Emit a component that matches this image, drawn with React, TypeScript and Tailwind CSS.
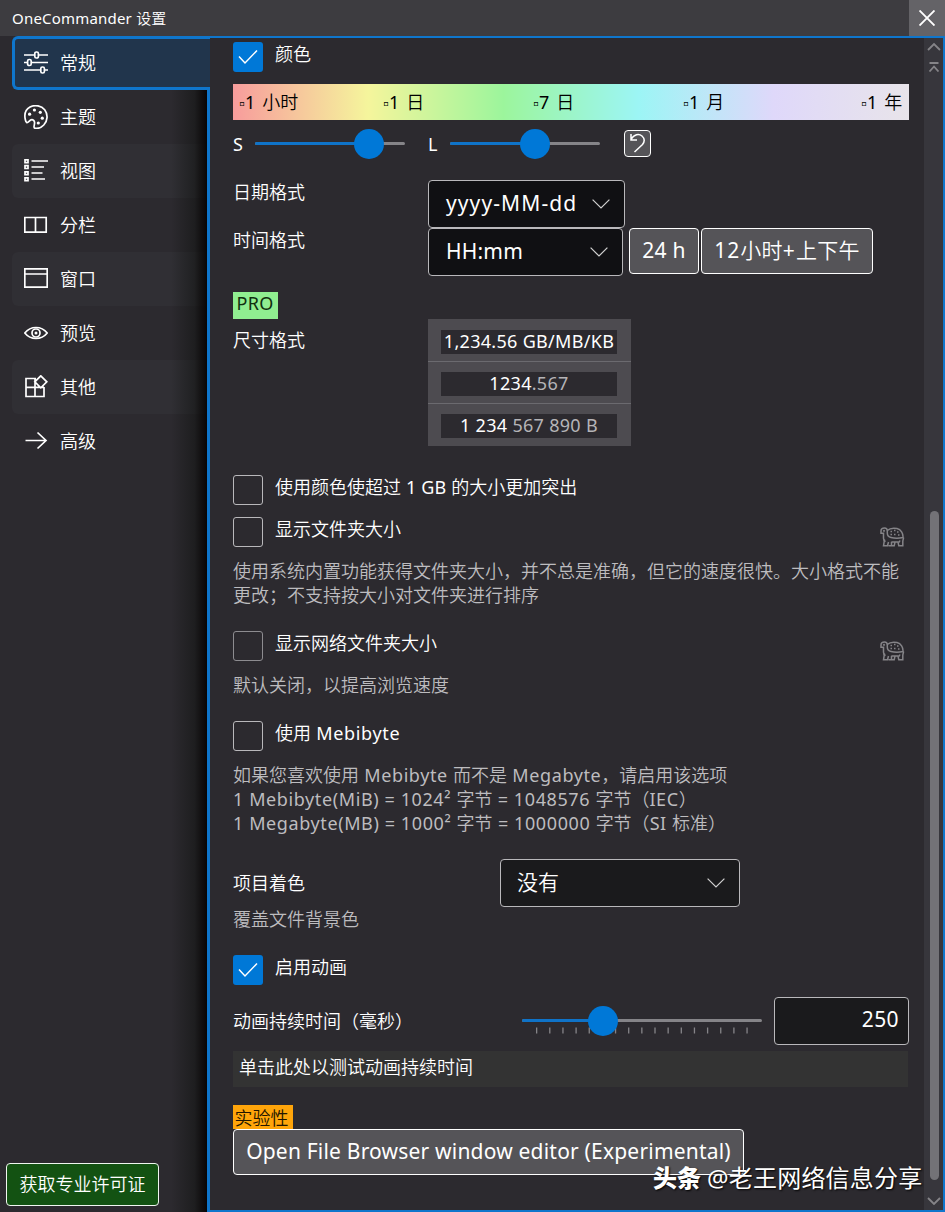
import { useState, type ReactNode } from "react";

type IconProps = { children: ReactNode };

function Icon({ children }: IconProps) {
  return (
    <svg width="24" height="24" viewBox="0 0 24 24" fill="none" stroke="#fff" strokeWidth="1.7" className="shrink-0">
      {children}
    </svg>
  );
}

const navItems = [
  {
    label: "常规",
    icon: (
      <Icon>
        <path d="M0 4h10.5M14.5 4H24M0 11.5h3.5M7.5 11.5H24M0 19h16.5M20.5 19H24" />
        <rect x="10.8" y="1" width="3.6" height="6" rx="1.6" />
        <rect x="3.6" y="8.5" width="3.6" height="6" rx="1.6" />
        <rect x="16.8" y="16" width="3.6" height="6" rx="1.6" />
      </Icon>
    ),
  },
  {
    label: "主题",
    icon: (
      <Icon>
        <path d="M1.3 14.5C.1 9 1.6 4.4 6 2 11-.6 17.5.6 20.7 4.8c3.5 4.7 3 11.2-.9 15.2-2.6 2.7-6.3 3.8-9.1 3.2-1.8-.5.3-3.6-.2-6.2-.4-2.2-2.6-3-4.5-1.5-1.3 1-2.2 2.6-3.4 1.9-.8-.5-1.1-1.8-1.3-2.9z" />
        <g fill="#fff" stroke="none">
          <circle cx="5.6" cy="9.2" r="1.6" />
          <circle cx="10.4" cy="5" r="1.6" />
          <circle cx="16.3" cy="7.3" r="1.6" />
          <circle cx="18.3" cy="13.2" r="1.6" />
          <circle cx="14.3" cy="18" r="1.6" />
        </g>
      </Icon>
    ),
  },
  {
    label: "视图",
    icon: (
      <Icon>
        <path d="M7.5 2H24M7.5 8H20M7.5 14h11M7.5 20H21" />
        <path d="M1 .8h3v2.8H1zM1 6.7h3v2.8H1zM1 12.8h3v2.8H1zM1 18.8h3v2.8H1z" />
      </Icon>
    ),
  },
  {
    label: "分栏",
    icon: (
      <Icon>
        <path d="M.8 4.5h21.4v14.7H.8zM11.5 4.5v14.7" />
      </Icon>
    ),
  },
  {
    label: "窗口",
    icon: (
      <Icon>
        <path d="M.8 1.8h22.4v18.4H.8zM.8 7h22.4" />
      </Icon>
    ),
  },
  {
    label: "预览",
    icon: (
      <Icon>
        <path d="M.8 12C4 8 7.8 6.5 12 6.5S20 8 23.2 12C20 16 16.2 17.5 12 17.5S4 16 .8 12z" />
        <circle cx="12" cy="12" r="4" />
        <circle cx="12" cy="12" r="1.5" fill="#fff" stroke="none" />
      </Icon>
    ),
  },
  {
    label: "其他",
    icon: (
      <Icon>
        <path d="M12 3.5H2v18h18V12M11 3.5v18M2 12.3h18M16.8.8l6 6-6 6-6-6z" />
      </Icon>
    ),
  },
  {
    label: "高级",
    icon: (
      <Icon>
        <path d="M1.5 11.5H22M13.5 3.5l8.5 8-8.5 8" />
      </Icon>
    ),
  },
];

const ages = [
  { text: "1 小时", className: "w-[144px]" },
  { text: "1 日", className: "w-[150px]" },
  { text: "7 日", className: "w-[150px]" },
  { text: "1 月", className: "w-[178px]" },
  { text: "1 年", className: "" },
];

// Latin runs are set a step heavier than the CJK text around them
function Mixed({ text, tracking = "tracking-[0.2px]" }: { text: string; tracking?: string }) {
  return text.split(/([ -~²]+)/).map((run, i) =>
    i % 2 === 1 ? (
      <span key={i} className={`font-normal ${tracking}`}>
        {run}
      </span>
    ) : (
      run
    ),
  );
}

function Chevron() {
  return (
    <svg width="18" height="10" viewBox="0 0 18 10" fill="none" stroke="#d0d0d0" strokeWidth="1.2" className="shrink-0">
      <path d="M.6.6 9 9l8.4-8.4" />
    </svg>
  );
}

function Turtle() {
  return (
    <svg width="25" height="20" viewBox="0 0 25 20" fill="none" stroke="#858488" strokeWidth="1.5" className="mt-2.5 shrink-0">
      <path d="M7.3 4C7.3 2 6.5 1 4.5 1 2.5 1 1 2 1 4v2.3h2.5v5c0 1.5.8 2.7 2 3.4M7.3 4v2c0 2.6 1.2 4 3.7 4.5 4 .9 8 .8 12 0 .3-4-2-8-6-9C13.5.8 10 .9 7.3 3.5" />
      <path d="M4.5 12.5 3.5 18.8h4l1-3.8M11.5 14.8v4h-3M11.5 15H18l.8 3.8h4V14l.8-3.5M15 15l-.8 3.8h-2.7M20 13.5l-1 2" />
      <path d="M10.5 4.5H12M14 3.5h1.5M17 5h1.5M10.5 7.5H12M14 7.5h1.5M18 8h1.5" strokeWidth="1.3" />
      <circle cx="4" cy="3.8" r=".4" />
    </svg>
  );
}

type CheckProps = { label: string; tracking?: string; initial?: boolean; dim?: boolean; slow?: boolean };

function Check({ label, tracking, initial = false, dim = false, slow = false }: CheckProps) {
  const [on, setOn] = useState(initial);
  const box = on ? "bg-[#0078d7]" : dim ? "border border-[#8d8c90]" : "border border-[#b9b8bb]";
  return (
    <div className="flex h-[30px] w-[672px] items-start justify-between">
      <button onClick={() => setOn(!on)} className="flex items-start gap-3">
        <span className={`flex size-[30px] items-center justify-center rounded-[3px] ${box}`}>
          {on && (
            <svg width="20" height="16" viewBox="0 0 20 16" fill="none" stroke="#fff" strokeWidth="1.5">
              <path d="M1 7.5 7 14 19 1.5" />
            </svg>
          )}
        </span>
        <span className="leading-6">
          <Mixed text={label} tracking={tracking} />
        </span>
      </button>
      {slow && <Turtle />}
    </div>
  );
}

type SliderProps = { width: number; value: number; ticks?: boolean };

function Slider({ width, value, ticks = false }: SliderProps) {
  return (
    <svg width={width} height="30" viewBox={`0 0 ${width} 30`} className="shrink-0">
      <rect y="13" width={width} height="3" rx="1.5" fill="#858488" />
      <rect y="13" width={value} height="3" rx="1.5" fill="#0f73c8" />
      {ticks &&
        Array.from({ length: 17 }, (_, i) => (
          <rect key={i} x={14 + i * 13.15} y="21.5" width="1.3" height="6" fill="#858488" />
        ))}
      <circle cx={value} cy="15" r="15" fill="#0078d7" />
    </svg>
  );
}

export default function App() {
  const [active, setActive] = useState(0);

  return (
    <div className="relative flex h-[1212px] w-[945px] flex-col overflow-hidden bg-[#2c2a2f] font-['Noto_Sans','Noto_Sans_CJK_SC',sans-serif] text-[18px] font-[350] whitespace-nowrap text-white">
      <header className="flex h-9 shrink-0 items-center justify-between bg-[#3d3c40] pl-3">
        <h1 className="text-[15px]">
          <Mixed text="OneCommander 设置" />
        </h1>
        <button aria-label="关闭" className="flex size-9 items-center justify-center bg-[#646367]">
          <svg width="16" height="16" viewBox="0 0 16 16" stroke="#fff" strokeWidth="1.9">
            <path d="m.5.5 15 15M15.5.5l-15 15" />
          </svg>
        </button>
      </header>

      <div className="flex min-h-0 flex-1">
        <aside className="relative flex w-[207px] shrink-0 flex-col justify-between">
          <nav className="flex flex-col pl-3">
            {navItems.map((item, i) => (
              <button
                key={item.label}
                onClick={() => setActive(i)}
                className={
                  i === active
                    ? "relative z-10 -mr-[3px] flex h-[54px] items-center gap-3 rounded-l-md border-3 border-r-0 border-[#0f76cc] bg-[#21354c] pl-[9px]"
                    : i % 2 === 0
                      ? "flex h-[54px] items-center gap-3 rounded-l-md bg-[#302f34] pl-3"
                      : "flex h-[54px] items-center gap-3 pl-3"
                }
              >
                {item.icon}
                <span>{item.label}</span>
              </button>
            ))}
          </nav>
          <div className="absolute inset-y-0 right-0 w-9 bg-linear-to-r from-transparent via-[#101210]/50 via-65% to-[#080606]" />
          <button className="mb-1.5 ml-1.5 h-[43px] w-[153px] rounded-[4px] border border-[#f0f6f0] bg-[#135212]">
            获取专业许可证
          </button>
        </aside>

        <main className="flex flex-1 border-2 border-l-3 border-[#0f76cc]">
          <div className="flex flex-1 flex-col items-start pt-1 pl-[23px]">
            <Check label="颜色" initial />

            <div className="mt-3 flex h-9 w-[676px] items-center bg-[linear-gradient(90deg,#f79c9c_0%,#f5f59c_20%,#9cf59c_40%,#9cf5f5_60%,#dfd8fa_80%,#e8e4ea_100%)] pl-1.5 text-black">
              {ages.map((age) => (
                <span key={age.text} className={age.className}>
                  <span className="inline-block w-1.5 font-['DejaVu_Sans'] text-[16px]">▫</span>
                  <Mixed text={age.text} tracking="tracking-[1.1px]" />
                </span>
              ))}
            </div>

            <div className="mt-[9px] flex h-[30px] items-center font-normal">
              <span className="w-[22px]">S</span>
              <Slider width={150} value={114} />
              <span className="ml-[23px] w-[22px]">L</span>
              <Slider width={150} value={85} />
              <button aria-label="重置" className="mb-0.5 ml-6 flex size-[27px] items-center justify-center rounded-[4px] border border-white bg-[#555458]">
                <svg width="17" height="20" viewBox="0 0 17 20" fill="none" stroke="#fff" strokeWidth="1.5">
                  <path d="M2 1v6h6M2 6.5C5 1 10 .3 13 3c3 2.8 2.5 6 .5 8.5L5.5 19" />
                </svg>
              </button>
            </div>

            <div className="mt-[21px] flex h-12 items-start">
              <span className="w-[195px] leading-6">日期格式</span>
              <button className="flex h-12 w-[197px] items-center justify-between rounded-[4px] border border-[#b9b8bb] bg-[#101013] pr-[14px] pl-[17px] text-[21px] font-normal">
                <span className="tracking-[1.1px]">yyyy-MM-dd</span>
                <Chevron />
              </button>
            </div>
            <div className="flex h-12 items-start">
              <span className="w-[195px] leading-6">时间格式</span>
              <button className="flex h-12 w-[195px] items-center justify-between rounded-[4px] border border-[#b9b8bb] bg-[#101013] pr-[14px] pl-[17px] text-[21px] font-normal">
                <span className="tracking-[0.2px]">HH:mm</span>
                <Chevron />
              </button>
              <button className="ml-1.5 h-[46px] w-[70px] rounded-[4px] border border-white bg-[#555458] text-[21px] font-normal tracking-[0.3px]">24 h</button>
              <button className="ml-0.5 h-[46px] w-[172px] rounded-[4px] border border-white bg-[#555458] text-[21px] tracking-[0.3px]">
                <Mixed text="12小时+上下午" tracking="tracking-[1px]" />
              </button>
            </div>

            <span className="mt-4 flex h-[27px] w-[45px] justify-center bg-[#90ee90] pr-px leading-[22px] font-normal tracking-[0.3px] text-[#10300f]">PRO</span>
            <div className="flex h-[127px]">
              <span className="mt-2 w-[195px] leading-[26px]">尺寸格式</span>
              <div className="w-[203px] divide-y divide-[#6b6a6f] bg-[#4d4b50] font-normal tracking-[0.3px]">
                <div className="flex h-[43px] items-center justify-center pt-[3px] pr-px">
                  <span className="h-6 w-[176px] bg-[#2c2a2f] text-center leading-[22px]">1,234.56 GB/MB/KB</span>
                </div>
                <div className="flex h-[42px] items-center justify-center pt-[2px] pr-px">
                  <span className="h-6 w-[176px] bg-[#2c2a2f] text-center leading-[22px]">
                    1234<span className="text-[#b5b4b7]">.567</span>
                  </span>
                </div>
                <div className="flex h-[42px] items-center justify-center pt-px pr-px">
                  <span className="h-6 w-[176px] bg-[#2c2a2f] text-center leading-[22px]">
                    1 234 <span className="text-[#b5b4b7]">567 890 B</span>
                  </span>
                </div>
              </div>
            </div>

            <div className="mt-[29px] flex flex-col gap-3">
              <Check label="使用颜色使超过 1 GB 的大小更加突出" />
              <Check label="显示文件夹大小" slow />
            </div>
            <p className="mt-3 mb-px leading-6 text-[#bdbcbf]">
              使用系统内置功能获得文件夹大小，并不总是准确，但它的速度很快。大小格式不能
              <br />
              更改；不支持按大小对文件夹进行排序
            </p>
            <div className="mt-[23px]">
              <Check label="显示网络文件夹大小" dim slow />
            </div>
            <p className="mt-3 mb-px leading-6 text-[#bdbcbf]">默认关闭，以提高浏览速度</p>
            <div className="mt-[23px]">
              <Check label="使用 Mebibyte" tracking="tracking-[0.65px]" />
            </div>
            <p className="mt-3 mb-px leading-6 text-[#bdbcbf]">
              <Mixed text="如果您喜欢使用 Mebibyte 而不是 Megabyte，请启用该选项" tracking="tracking-[0.6px]" />
              <br />
              <Mixed text="1 Mebibyte(MiB) = 1024² 字节 = 1048576 字节（IEC）" tracking="tracking-[0.6px]" />
              <br />
              <Mixed text="1 Megabyte(MB) = 1000² 字节 = 1000000 字节（SI 标准）" tracking="tracking-[0.6px]" />
            </p>

            <div className="mt-[23px] flex h-12 items-center">
              <span className="w-[267px]">项目着色</span>
              <button className="flex h-12 w-60 items-center justify-between rounded-[4px] border border-[#b9b8bb] bg-[#1a1a1c] pr-[14px] pl-4 text-[21px]">
                没有
                <Chevron />
              </button>
            </div>
            <p className="leading-6 text-[#bdbcbf]">覆盖文件背景色</p>
            <div className="mt-6">
              <Check label="启用动画" initial />
            </div>

            <div className="mt-3 flex h-12 items-center">
              <span className="w-[289px]">动画持续时间（毫秒）</span>
              <Slider width={240} value={81} ticks />
              <input
                defaultValue="250"
                className="ml-3 h-12 w-[135px] rounded-[4px] border border-[#b9b8bb] bg-[#1a1a1c] pr-[9px] pb-1 text-right text-[21px] font-normal tracking-[0.4px] outline-none"
              />
            </div>
            <button className="mt-1.5 h-9 w-[675px] bg-[#333333] pb-1 pl-1.5 text-left">单击此处以测试动画持续时间</button>

            <span className="mt-[18px] flex h-6 w-[60px] justify-center bg-[#ffa50a] pr-[3px] leading-[26px] text-[#241600]">实验性</span>
            <button className="h-[46px] w-[511px] rounded-[4px] border border-white bg-[#555458] text-[21px] font-normal tracking-[0.2px]">
              Open File Browser window editor (Experimental)
            </button>
          </div>

          <div className="flex w-[19px] shrink-0 flex-col items-center bg-[#37363c] pt-1">
            <svg width="14" height="30" viewBox="0 0 14 30" fill="none" stroke="#858488" strokeWidth="1.8">
              <path d="M1 8l6-6 6 6M2.5 21h9M2.5 29.5 7 24.5l4.5 5" />
            </svg>
            <div className="mt-[439px] ml-px h-[669px] w-[9px] rounded-full bg-[#737277]" />
            <svg width="14" height="8" viewBox="0 0 14 8" fill="none" stroke="#858488" strokeWidth="1.8" className="mt-[17px]">
              <path d="M1 1l6 6 6-6" />
            </svg>
          </div>
        </main>
      </div>

      <div className="absolute top-[1160px] left-[653px] flex items-center gap-1.5 text-[24px] leading-9 font-normal [text-shadow:1px_1px_2px_#000]">
        <span className="font-black">头条</span>
        <span className="tracking-[0.2px]">@老王网络信息分享</span>
      </div>
    </div>
  );
}
